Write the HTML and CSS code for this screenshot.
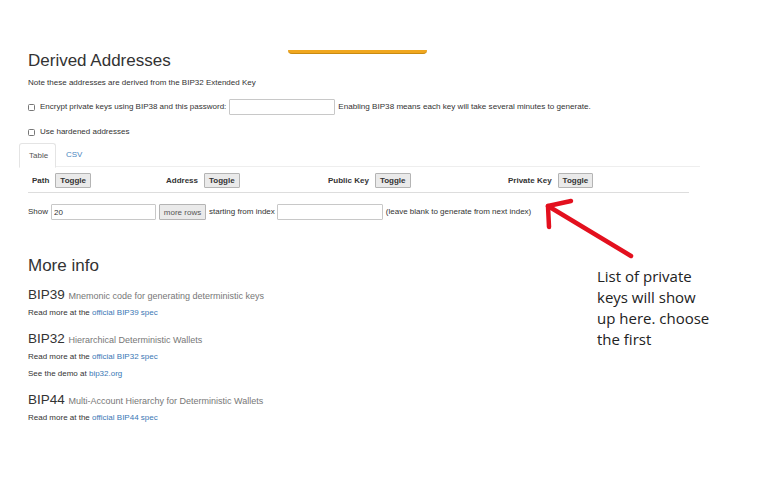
FILE: index.html
```html
<!DOCTYPE html>
<html>
<head>
<meta charset="utf-8">
<link rel="stylesheet" href="styles.css">
</head>
<body>
<div class="page">
  <div class="bar"></div>
  <h2 class="heading">Derived Addresses</h2>
  <p class="note">Note these addresses are derived from the BIP32 Extended Key</p>
  <div class="row encrypt">
    <input type="checkbox" class="cb">
    <span>Encrypt private keys using BIP38 and this password:</span>
    <input type="text" class="field pw">
    <span class="hint">Enabling BIP38 means each key will take several minutes to generate.</span>
  </div>
  <div class="row hardened">
    <input type="checkbox" class="cb">
    <span>Use hardened addresses</span>
  </div>
  <div class="tabs">
    <div class="tab active">Table</div>
    <div class="tab">CSV</div>
  </div>
  <div class="thead">
    <div class="th c1"><span>Path</span><button class="btn">Toggle</button></div>
    <div class="th c2"><span>Address</span><button class="btn">Toggle</button></div>
    <div class="th c3"><span>Public Key</span><button class="btn">Toggle</button></div>
    <div class="th c4"><span>Private Key</span><button class="btn">Toggle</button></div>
  </div>
  <div class="row show">
    <span>Show</span>
    <input type="text" class="field num" value="20">
    <button class="btn more">more rows</button>
    <span>starting from index</span>
    <input type="text" class="field idx">
    <span>(leave blank to generate from next index)</span>
  </div>
  <h2 class="heading more-info">More info</h2>
  <div class="bip first">BIP39 <span class="sub">Mnemonic code for generating deterministic keys</span></div>
  <p class="read">Read more at the <a href="#">official BIP39 spec</a></p>
  <div class="bip">BIP32 <span class="sub">Hierarchical Deterministic Wallets</span></div>
  <p class="read">Read more at the <a href="#">official BIP32 spec</a></p>
  <p class="read demo">See the demo at <a href="#">bip32.org</a></p>
  <div class="bip last">BIP44 <span class="sub">Multi-Account Hierarchy for Deterministic Wallets</span></div>
  <p class="read">Read more at the <a href="#">official BIP44 spec</a></p>

  <svg class="arrow" width="780" height="480" viewBox="0 0 780 480">
    <g stroke="#e3101e" stroke-width="4.5" stroke-linecap="round" stroke-linejoin="round" fill="none">
      <path d="M631 256 L548 206"/>
      <path d="M571 201 L548 206 L549 227"/>
    </g>
  </svg>
  <div class="annotation">List of private<br>keys will show<br>up here. choose<br>the first</div>
</div>
</body>
</html>
```
FILE: styles.css
```css
html, body {
  margin: 0;
  padding: 0;
  background: #fff;
}
.page {
  position: relative;
  width: 780px;
  height: 480px;
  padding: 50px 0 0 28px;
  box-sizing: border-box;
  font-family: "Liberation Sans", Arial, sans-serif;
  color: #333;
  font-size: 8px;
}
.bar {
  margin-left: 260px;
  width: 139px;
  height: 3px;
  background: #f0a71f;
  border-bottom: 1px solid #c98b12;
  border-radius: 0 0 6px 6px;
}
.heading {
  margin: 0;
  font-weight: normal;
  font-size: 17px;
  line-height: 14px;
  color: #333;
}
.note {
  margin: 10px 0 0;
  line-height: 10px;
}
.row {
  display: flex;
  align-items: center;
  line-height: 10px;
}
.encrypt {
  margin-top: 11px;
  height: 16px;
}
.hint {
  font-size: 8.1px;
}
.hardened {
  margin-top: 12px;
  height: 10px;
}
.cb {
  appearance: none;
  -webkit-appearance: none;
  width: 7px;
  height: 7px;
  margin: 0 5px 0 0;
  border: 1px solid #777;
  border-radius: 1.5px;
  background: #fff;
}
.field {
  box-sizing: border-box;
  height: 16px;
  border: 1px solid #c8c8c8;
  border-radius: 1px;
  padding: 0 2px;
  font: 8px "Liberation Sans", Arial, sans-serif;
  color: #333;
  margin: 0;
}
.pw {
  width: 106px;
  margin: 0 3px 0 3px;
}
.tabs {
  display: flex;
  margin: 6px 0 0 -9px;
  width: 681px;
  height: 24px;
  border-bottom: 1px solid #eee;
  box-sizing: border-box;
}
.tab {
  height: 24px;
  line-height: 23px;
  padding: 0 9px;
  color: #4a86c0;
  box-sizing: border-box;
}
.tab.active {
  color: #555;
  width: 37px;
  border: 1px solid #e4e4e4;
  border-bottom-color: #fff;
  border-radius: 3px 3px 0 0;
  margin-right: 1px;
  height: 25px;
  background: #fff;
}
.thead {
  display: flex;
  margin-top: 5px;
  width: 661px;
  padding-bottom: 4px;
  border-bottom: 1px solid #ddd;
  font-weight: bold;
}
.th {
  display: flex;
  align-items: center;
  gap: 6px;
  padding-left: 4px;
  box-sizing: border-box;
  height: 16px;
}
.c1 { width: 134px; }
.c2 { width: 162px; }
.c3 { width: 180px; }
.c4 { width: 185px; }
.btn {
  box-sizing: border-box;
  height: 15px;
  padding: 0 4px;
  border: 1px solid #b4b4b4;
  border-radius: 1px;
  background: #eaeaea;
  font: bold 8px "Liberation Sans", Arial, sans-serif;
  color: #333;
  margin: 0;
}
.show {
  margin-top: 11px;
  height: 16px;
}
.num {
  width: 105px;
  margin: 0 3px 0 3px;
}
.more {
  font-weight: normal;
  height: 16px;
  width: 47px;
  padding: 0;
  margin-right: 3px;
  color: #555;
}
.idx {
  width: 106px;
  margin: 0 3px 0 2px;
}
.more-info {
  margin-top: 36px;
  line-height: 20px;
}
.bip {
  font-size: 13.5px;
  line-height: 16px;
  margin-top: 13px;
  color: #333;
}
.bip.first {
  margin-top: 11px;
}
.bip.last {
  margin-top: 13px;
}
.sub {
  font-size: 9px;
  color: #777;
}
.read {
  margin: 4px 0 0;
  line-height: 10px;
}
.demo {
  margin-top: 7px;
}
a {
  color: #3a78b5;
  text-decoration: none;
}
.arrow {
  position: absolute;
  left: 0;
  top: 0;
  pointer-events: none;
}
.annotation {
  position: absolute;
  left: 597px;
  top: 266px;
  font-family: "Open Sans", "Noto Sans", sans-serif;
  font-size: 15px;
  line-height: 21px;
  color: #222;
}
```
